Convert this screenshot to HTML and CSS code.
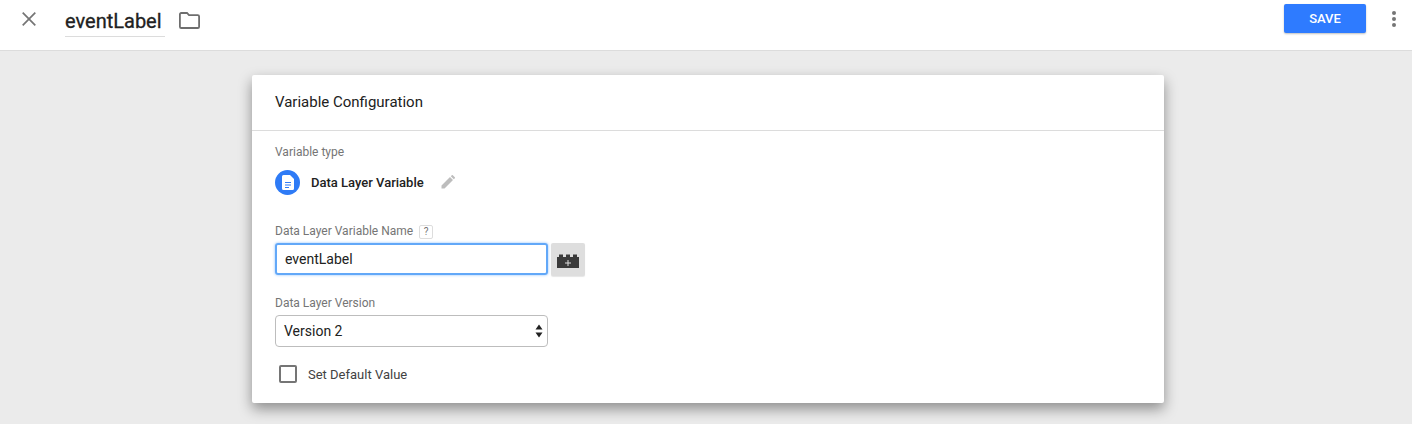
FILE: index.html
```html
<!DOCTYPE html>
<html lang="en">
<head>
    <meta charset="UTF-8">
    <title>eventLabel</title>
    <link rel="stylesheet" href="styles.css">
</head>
<body>
    <!-- top bar -->
    <div class="top">
        <svg class="close" width="14" height="14" viewBox="0 0 14 14"><path d="M0.700 0.700L13.300 13.300M13.300 0.700L0.700 13.300" fill="none" stroke="#757575" stroke-width="1.700"/></svg>
        <div class="name">eventLabel</div>
        <svg class="folder" width="21" height="17" viewBox="0 0 21 17"><path d="M2.200 1h5.800l2 2.200h8.800a1.300 1.300 0 0 1 1.300 1.300v10.200a1.300 1.300 0 0 1-1.300 1.300h-16.600a1.300 1.300 0 0 1-1.300-1.300v-12.400a1.300 1.300 0 0 1 1.300-1.300z" fill="none" stroke="#6e6e6e" stroke-width="1.800"/></svg>
        <div class="grow"></div>
        <div class="save">SAVE</div>
        <div class="more"><i></i><i></i><i></i></div>
    </div>

    <div class="page">
        <div class="card">
            <div class="card-title">Variable Configuration</div>
            <div class="card-body">
                <div class="label">Variable type</div>
                <div class="type">
                    <span class="type-icon">
                        <svg width="12" height="15" viewBox="0 0 12 15"><path d="M1.500 0h6.500l4 4v9.500a1.500 1.500 0 0 1-1.500 1.500h-9a1.500 1.500 0 0 1-1.500-1.500v-12a1.500 1.500 0 0 1 1.500-1.500z" fill="#fff"/><path d="M3 7.500h6M3 10h6M3 12.500h4" stroke="#2e7bf6" stroke-width="1.200"/></svg>
                    </span>
                    <span class="type-name">Data Layer Variable</span>
                    <svg class="pencil" width="14" height="14" viewBox="0 0 14 14"><path d="M0.500 13.500v-3l8.500-8.500 3 3-8.500 8.500zM9.800 1.200l1-1a0.700 0.700 0 0 1 1 0l2 2a0.700 0.700 0 0 1 0 1l-1 1z" fill="#bdbdbd"/></svg>
                </div>

                <div class="label name-label">Data Layer Variable Name <span class="help">?</span></div>
                <div class="input-row">
                    <div class="input">eventLabel</div>
                    <div class="brick">
                        <svg width="22" height="14" viewBox="0 0 22 14"><path d="M0 3h2v-2.500h4v2.500h3v-2.500h4v2.500h3v-2.500h4v2.500h2v11h-22z" fill="#3a3a3a"/><path d="M11 6v6M8 9h6" stroke="#ddd" stroke-width="1"/></svg>
                    </div>
                </div>

                <div class="label version-label">Data Layer Version</div>
                <div class="select">
                    <span>Version 2</span>
                    <svg width="8" height="14" viewBox="0 0 8 14"><path d="M4 0.500l3.500 5h-7zM4 13.500l-3.500-5h7z" fill="#222"/></svg>
                </div>

                <div class="check">
                    <span class="box"></span>
                    <span>Set Default Value</span>
                </div>
            </div>
        </div>
    </div>
</body>
</html>
```

FILE: styles.css
```css
*{
    box-sizing: border-box;
}
html,body{
    height: 100%;
}
body{
    margin: 0;
    overflow: hidden;
    background-color: #ebebeb;
    font-family: Roboto, "Liberation Sans", sans-serif;
    color: #212121;
}
.top{
    height: 51px;
    background-color: #fff;
    border-bottom: 1px solid #dcdcdc;
    display: flex;
    align-items: flex-start;
    padding-left: 22px;
}
.close{
    margin-top: 12px;
}
.name{
    margin-left: 29px;
    width: 100px;
    height: 37px;
    padding-top: 9px;
    font-size: 20px;
    line-height: 24px;
    font-weight: 400;
    -webkit-text-stroke: .3px #212121;
    border-bottom: 1px solid #dcdcdc;
}
.folder{
    margin-left: 14px;
    margin-top: 12px;
}
.grow{
    flex: 1;
}
.save{
    width: 82px;
    height: 29px;
    margin-top: 4px;
    background-color: #2e7bff;
    border-radius: 2px;
    box-shadow: 0 1px 2px rgba(0,0,0,.25);
    color: #fff;
    font-size: 13px;
    font-weight: 500;
    line-height: 29px;
    text-align: center;
}
.more{
    width: 4px;
    margin: 11px 16px 0 26px;
    display: flex;
    flex-direction: column;
    gap: 2px;
}
.more i{
    width: 4px;
    height: 4px;
    border-radius: 50%;
    background-color: #757575;
}
.page{
    padding: 24px 0 0 4px;
    display: flex;
    justify-content: center;
}
.card{
    width: 912px;
    height: 328px;
    background-color: #fff;
    border-radius: 2px;
    box-shadow: 0 6px 14px rgba(0,0,0,.4);
}
.card-title{
    height: 56px;
    padding: 0 23px;
    font-size: 15px;
    line-height: 54px;
    border-bottom: 1px solid #dcdcdc;
}
.card-body{
    padding: 14px 23px;
}
.label{
    font-size: 12px;
    line-height: 14px;
    color: #757575;
}
.type{
    margin-top: 10px;
    height: 26px;
    display: flex;
    align-items: center;
}
.type-icon{
    width: 25px;
    height: 25px;
    border-radius: 50%;
    background-color: #2e7bf6;
    display: flex;
    align-items: center;
    justify-content: center;
}
.type-name{
    margin-left: 11px;
    font-size: 13px;
    font-weight: 500;
}
.pencil{
    margin-left: 17px;
}
.name-label{
    margin-top: 29px;
}
.help{
    display: inline-block;
    width: 14px;
    height: 14px;
    margin-left: 3px;
    border: 1px solid #ddd;
    border-radius: 2px;
    font-size: 10px;
    line-height: 12px;
    text-align: center;
}
.input-row{
    margin-top: 4px;
    display: flex;
    gap: 3px;
}
.input{
    width: 273px;
    height: 32px;
    padding-left: 8px;
    border: 2px solid #62a8f8;
    border-radius: 3px;
    box-shadow: 0 0 3px #8fc0fb;
    font-size: 14px;
    line-height: 28px;
}
.brick{
    width: 34px;
    height: 33px;
    padding-top: 2px;
    background-color: #dedede;
    border-radius: 2px;
    box-shadow: 0 1px 1px rgba(0,0,0,.1);
    display: flex;
    align-items: center;
    justify-content: center;
}
.version-label{
    margin-top: 20px;
}
.select{
    margin-top: 5px;
    width: 273px;
    height: 32px;
    padding: 0 4px 0 8px;
    border: 1px solid #bdbdbd;
    border-radius: 4px;
    font-size: 14px;
    display: flex;
    align-items: center;
    justify-content: space-between;
}
.check{
    margin-top: 18px;
    margin-left: 4px;
    display: flex;
    align-items: center;
    gap: 11px;
    font-size: 13px;
    color: #424242;
}
.box{
    width: 18px;
    height: 18px;
    border: 2px solid #757575;
    border-radius: 2px;
}
```
